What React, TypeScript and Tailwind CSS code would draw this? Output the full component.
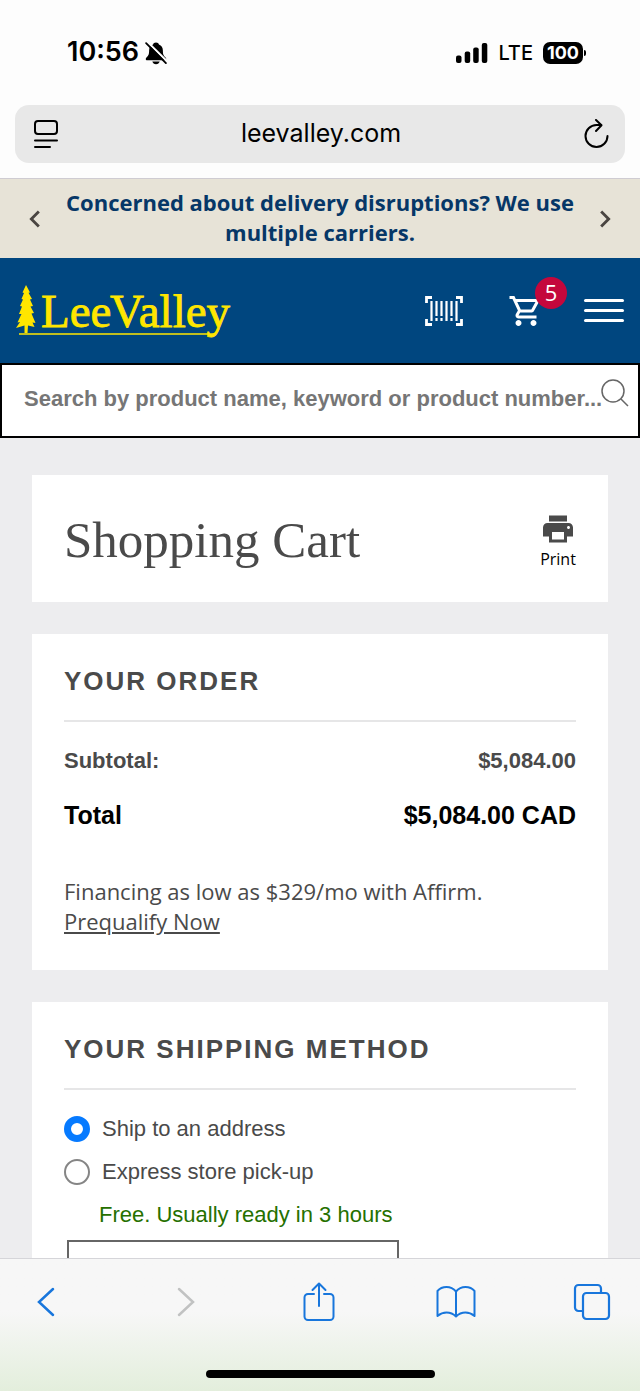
import React, { useState } from "react";
import { MdChevronLeft, MdChevronRight, MdOutlineShoppingCart, MdPrint } from "react-icons/md";

type IconProps = { className?: string };

function BellSlashIcon({ className }: IconProps) {
  return (
    <svg viewBox="0 0 24 26" className={className} aria-hidden="true">
      <path
        d="M12 1.500c-1.700 0-3 1-3.200 2.300C6 4.900 4.500 7.300 4.500 10.300c0 4.300-.8 5.500-2.400 7-.8.800-1.300 1.500-1.300 2.200 0 .8.600 1.400 1.500 1.400h19.400c.9 0 1.500-.6 1.500-1.400 0-.7-.5-1.400-1.300-2.200-1.600-1.500-2.400-2.700-2.400-7 0-3-1.500-5.400-4.300-6.500C15 2.500 13.700 1.500 12 1.500Z"
        fill="currentColor"
      />
      <path d="M8 22.300h8c-.4 1.700-2 2.900-4 2.900S8.400 24 8 22.300Z" fill="currentColor" />
      <path d="M2.500 0.800 24.500 22.500" stroke="#fdfdfd" strokeWidth="2.200" />
      <path d="M1.200 2.200 22.800 24" stroke="currentColor" strokeWidth="2" strokeLinecap="round" />
    </svg>
  );
}

function SignalIcon({ className }: IconProps) {
  return (
    <svg viewBox="0 0 32 20" className={className} fill="currentColor" aria-hidden="true">
      <rect x="0" y="12.500" width="5.500" height="7.500" rx="2" />
      <rect x="8.700" y="8.500" width="5.500" height="11.500" rx="2" />
      <rect x="17.200" y="4.500" width="5.500" height="15.500" rx="2" />
      <rect x="25.800" y="0" width="5.500" height="20" rx="2" />
    </svg>
  );
}

function PageMenuIcon({ className }: IconProps) {
  return (
    <svg viewBox="0 0 26 30" className={className} fill="none" stroke="currentColor" strokeWidth="2" strokeLinecap="round" aria-hidden="true">
      <rect x="2" y="2" width="22" height="13" rx="3" />
      <path d="M2 21.500h22M2 28h15" />
    </svg>
  );
}

function ReloadIcon({ className }: IconProps) {
  return (
    <svg viewBox="0 0 26 30" className={className} fill="none" stroke="currentColor" strokeWidth="2" strokeLinecap="round" strokeLinejoin="round" aria-hidden="true">
      <path d="M24.500 17a11 11 0 1 1-11-11h4.500" />
      <path d="M13 1 18.500 6.300 13 12" />
    </svg>
  );
}

function LeeValleyLogo({ className }: IconProps) {
  return (
    <svg viewBox="0 0 216 60" className={className} role="img" aria-label="Lee Valley">
      <g fill="#ffe600">
        <path d="M10 4 14 11.500 12.500 11.800 16 18 14 18.500 17 25 14.500 25.500 18 32 15.500 32.500 19.500 42 16.500 41.500 18.500 46 12 44.500 11.500 52 8.500 52 8.500 44.500 0 47 4 41 1.500 41.500 5.500 33 3 33 6 25.500 4 25 7 18.500 5.500 18 8 12 6.500 11.500Z" />
        <g fontFamily="'Liberation Serif', serif" fontSize="47" stroke="#ffe600" strokeWidth="0.800">
          <text x="25" y="46">Lee</text>
          <text x="94" y="46">Valley</text>
        </g>
      </g>
      <path d="M3 53H196c4 0 5-1.500 7-5" fill="none" stroke="#ffe600" strokeWidth="1.500" />
    </svg>
  );
}

function BarcodeScanIcon({ className }: IconProps) {
  return (
    <svg viewBox="0 0 40 32" className={className} fill="none" stroke="currentColor" strokeWidth="2.800" aria-hidden="true">
      <path d="M8 2.500H2.500V8M32 2.500h5.500V8M8 29.500H2.500V24M32 29.500h5.500V24" />
      <path d="M7.500 6v20M32.500 6v20" strokeWidth="2.200" />
      <path d="M12.500 6v15M17.500 6v15M22.500 6v20M27.500 6v15M12.500 23v3M17.500 23v3M27.500 23v3" strokeWidth="2.200" />
    </svg>
  );
}

function ShareIcon({ className }: IconProps) {
  return (
    <svg viewBox="0 0 32 40" className={className} fill="none" stroke="currentColor" strokeWidth="2" strokeLinecap="round" strokeLinejoin="round" aria-hidden="true">
      <path d="M11 12H5a3.500 3.500 0 0 0-3.500 3.500v19A3.500 3.500 0 0 0 5 38h22a3.500 3.500 0 0 0 3.500-3.500v-19A3.500 3.500 0 0 0 27 12h-6" />
      <path d="M16 24V2M9.500 8 16 1.500 22.500 8" />
    </svg>
  );
}

function BookIcon({ className }: IconProps) {
  return (
    <svg viewBox="0 0 40 34" className={className} fill="none" stroke="currentColor" strokeWidth="2" strokeLinejoin="round" aria-hidden="true">
      <path d="M20 6.500C17 3 14 2 10.500 2S4 3 1.500 6v25c3-2.500 5.500-3.500 9-3.500s6.500 1 9.500 4c3-3 6-4 9.500-4s6 1 9 3.500V6C36 3 33 2 29.500 2S23 3 20 6.500Zm0 0v25" />
    </svg>
  );
}

function TabsIcon({ className }: IconProps) {
  return (
    <svg viewBox="0 0 38 38" className={className} fill="none" stroke="currentColor" strokeWidth="2.200" aria-hidden="true">
      <path d="M10 28H5.500A3.500 3.500 0 0 1 2 24.500v-19A3.500 3.500 0 0 1 5.500 2h19A3.500 3.500 0 0 1 28 5.500V10" />
      <rect x="10" y="10" width="26" height="26" rx="3.500" />
    </svg>
  );
}

function StatusBar() {
  return (
    <div className="flex h-[105px] items-center justify-between pr-[54px] pl-[67px] font-[Inter,sans-serif] text-black">
      <div className="flex items-center gap-1.5">
        <span className="text-[27px] font-semibold">10:56</span>
        <BellSlashIcon className="h-6 w-[22px]" />
      </div>
      <div className="flex items-center gap-2.5">
        <SignalIcon className="h-5 w-8" />
        <span className="text-[20px] font-medium">LTE</span>
        <span className="flex items-center gap-px">
          <span className="flex h-[22px] items-center rounded-[7px] bg-black px-1 text-[18px] font-bold text-white">100</span>
          <span className="h-1.5 w-0.5 rounded-r-full bg-black" />
        </span>
      </div>
    </div>
  );
}

function AddressBar() {
  return (
    <div className="border-b border-[#cfccd2] px-[15px] pb-[15px]">
      <div className="flex h-[58px] items-center justify-between rounded-[14px] bg-[#e8e8e8] pr-4 pl-[18px] text-black">
        <button type="button" aria-label="Page menu">
          <PageMenuIcon className="h-[30px] w-[26px]" />
        </button>
        <span className="font-[Inter,sans-serif] text-[25px]">leevalley.com</span>
        <button type="button" aria-label="Reload">
          <ReloadIcon className="h-[30px] w-[26px]" />
        </button>
      </div>
    </div>
  );
}

function Announcement() {
  return (
    <div className="flex h-[79px] items-center justify-between bg-[#e7e3d7] px-[18px] text-[#4a4541]">
      <button type="button" aria-label="Previous message">
        <MdChevronLeft className="size-[34px]" />
      </button>
      <p className="flex-1 pb-1 text-center text-[22px] leading-[30px] font-bold text-[#063767]">
        Concerned about delivery disruptions? We use multiple carriers.
      </p>
      <button type="button" aria-label="Next message">
        <MdChevronRight className="size-[34px]" />
      </button>
    </div>
  );
}

function SiteHeader() {
  return (
    <header className="flex h-[105px] items-center justify-between bg-[#00467f] px-4 text-white">
      <a href="#home">
        <LeeValleyLogo className="h-[60px] w-[216px] overflow-visible" />
      </a>
      <div className="flex items-center">
        <button type="button" aria-label="Scan barcode" className="mr-11">
          <BarcodeScanIcon className="h-8 w-10" />
        </button>
        <button type="button" aria-label="Cart" className="relative mr-10">
          <MdOutlineShoppingCart className="size-9" />
          <span className="absolute -top-4 left-[27px] flex size-8 items-center justify-center rounded-full bg-[#c4073c] text-[22px]">
            5
          </span>
        </button>
        <button type="button" aria-label="Menu" className="flex w-10 flex-col gap-[7px]">
          <span className="h-[3px] w-full rounded-full bg-white" />
          <span className="h-[3px] w-full rounded-full bg-white" />
          <span className="h-[3px] w-full rounded-full bg-white" />
        </button>
      </div>
    </header>
  );
}

function SearchBox() {
  return (
    <div className="relative">
      <input
        type="text"
        aria-label="Search"
        placeholder="Search by product name, keyword or product number..."
        className="block h-[75px] w-full border-2 border-black bg-white pr-6 pb-1 pl-[22px] font-['Liberation_Sans',sans-serif] text-[22px] font-bold placeholder:text-[#767676]"
      />
      <svg viewBox="0 0 28 28" className="absolute top-4 right-[11px] size-7" fill="none" stroke="#666" strokeWidth="1.500" aria-hidden="true">
        <circle cx="12" cy="12" r="11" />
        <path d="m20 20 7 7" />
      </svg>
    </div>
  );
}

function SectionTitle({ children }: { children: React.ReactNode }) {
  return (
    <h2 className="border-b-2 border-[#e6e6e7] pb-6 font-['Liberation_Sans',sans-serif] text-[26px] leading-[30px] font-bold tracking-[2px] text-[#4a4a4a] uppercase">
      {children}
    </h2>
  );
}

const shippingMethods = [
  { value: "ship", label: "Ship to an address" },
  { value: "pickup", label: "Express store pick-up" },
];

export default function App() {
  const [method, setMethod] = useState("ship");

  return (
    <div className="flex h-screen flex-col bg-[#fdfdfd] font-['Open_Sans',sans-serif]">
      <div className="shrink-0">
        <StatusBar />
        <AddressBar />
      </div>

      <div className="min-h-0 flex-1 overflow-y-auto bg-[#ededef] [scrollbar-width:none]">
        <Announcement />
        <SiteHeader />
        <SearchBox />

        <main className="flex flex-col gap-8 px-8 pt-[37px] pb-8 text-[#4a4a4a]">
          <section className="flex h-[127px] items-center justify-between bg-white px-8 pt-1">
            <h1 className="font-['Liberation_Serif',serif] text-[51px]">Shopping Cart</h1>
            <button type="button" className="flex flex-col items-center">
              <MdPrint className="size-9" />
              <span className="text-base text-black">Print</span>
            </button>
          </section>

          <section className="bg-white px-8 py-8">
            <SectionTitle>Your Order</SectionTitle>
            <dl className="font-['Liberation_Sans',sans-serif] font-bold">
              <div className="flex justify-between pt-6 text-[22px] leading-[30px]">
                <dt>Subtotal:</dt>
                <dd>$5,084.00</dd>
              </div>
              <div className="flex justify-between pt-6 text-[25px] leading-[30px] text-black">
                <dt>Total</dt>
                <dd>$5,084.00 CAD</dd>
              </div>
            </dl>
            <p className="pt-[46px] pb-0.5 text-[22px] leading-[30px]">
              Financing as low as $329/mo with Affirm.
              <br />
              <a href="#prequalify" className="underline">Prequalify Now</a>
            </p>
          </section>

          <section className="bg-white px-8 py-8 font-['Liberation_Sans',sans-serif] text-[22px] leading-[30px]">
            <SectionTitle>Your Shipping Method</SectionTitle>
            <div className="flex flex-col gap-[13px] pt-6">
              {shippingMethods.map((item) => (
                <label key={item.value} className="flex items-center gap-3">
                  <input
                    type="radio"
                    name="shipping-method"
                    value={item.value}
                    checked={method === item.value}
                    onChange={() => setMethod(item.value)}
                    className="size-[26px] appearance-none rounded-full border-2 border-[#858585] bg-white checked:border-[7px] checked:border-[#067aff]"
                  />
                  {item.label}
                </label>
              ))}
              <p className="pl-[35px] text-[#257000]">Free. Usually ready in 3 hours</p>
            </div>
            <select aria-label="Store" className="mt-2.5 ml-[3px] block h-16 w-[332px] appearance-none border-2 border-[#666] bg-white" />
          </section>
        </main>
      </div>

      <nav
        aria-label="Browser"
        className="flex shrink-0 flex-col items-center border-t border-[#d5d5d9] bg-linear-to-b from-[#f7f7f7] from-40% to-[#e3eedc] pb-[13px]"
      >
        <div className="flex h-[86px] w-full items-center justify-between pr-[30px] pl-7 text-[#1876dc]">
          <button type="button" aria-label="Back" className="flex w-9 justify-center">
            <svg viewBox="0 0 36 30" className="h-[30px] w-9" fill="none" stroke="currentColor" strokeWidth="2.500" strokeLinecap="round">
              <path d="M25 2 11 15l14 13" />
            </svg>
          </button>
          <button type="button" aria-label="Forward" className="flex w-9 justify-center text-[#c1c2c2]" disabled>
            <svg viewBox="0 0 36 30" className="h-[30px] w-9" fill="none" stroke="currentColor" strokeWidth="2.500" strokeLinecap="round">
              <path d="m14 2 14 13-14 13" />
            </svg>
          </button>
          <button type="button" aria-label="Share" className="flex w-9 justify-center">
            <ShareIcon className="h-10 w-8 shrink-0" />
          </button>
          <button type="button" aria-label="Bookmarks" className="flex w-9 justify-center">
            <BookIcon className="h-[34px] w-10 shrink-0" />
          </button>
          <button type="button" aria-label="Tabs" className="flex w-9 justify-center">
            <TabsIcon className="size-[38px] shrink-0" />
          </button>
        </div>
        <div className="mt-[25px] h-2 w-[229px] rounded-full bg-black" />
      </nav>
    </div>
  );
}
